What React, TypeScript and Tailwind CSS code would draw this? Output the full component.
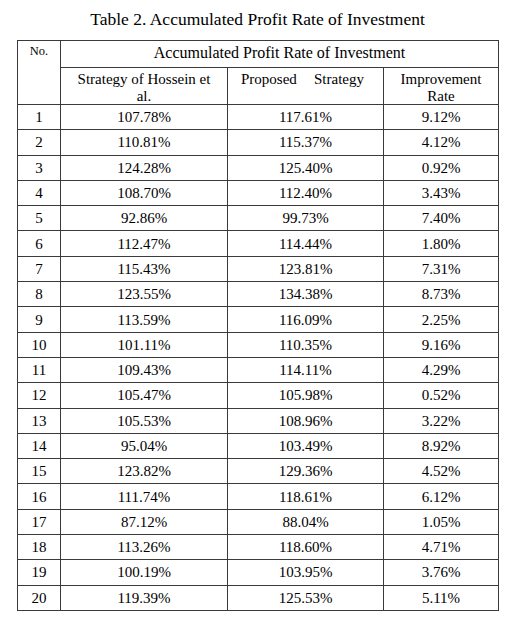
const rows = [
  ["107.78%", "117.61%", "9.12%"],
  ["110.81%", "115.37%", "4.12%"],
  ["124.28%", "125.40%", "0.92%"],
  ["108.70%", "112.40%", "3.43%"],
  ["92.86%", "99.73%", "7.40%"],
  ["112.47%", "114.44%", "1.80%"],
  ["115.43%", "123.81%", "7.31%"],
  ["123.55%", "134.38%", "8.73%"],
  ["113.59%", "116.09%", "2.25%"],
  ["101.11%", "110.35%", "9.16%"],
  ["109.43%", "114.11%", "4.29%"],
  ["105.47%", "105.98%", "0.52%"],
  ["105.53%", "108.96%", "3.22%"],
  ["95.04%", "103.49%", "8.92%"],
  ["123.82%", "129.36%", "4.52%"],
  ["111.74%", "118.61%", "6.12%"],
  ["87.12%", "88.04%", "1.05%"],
  ["113.26%", "118.60%", "4.71%"],
  ["100.19%", "103.95%", "3.76%"],
  ["119.39%", "125.53%", "5.11%"],
]

export default function App() {
  return (
    <div className="w-[525px] h-[629px] bg-white text-black font-['Liberation_Serif']">
      <div className="ml-[17px] w-[481px] pt-[9px]">
        <p className="font-['Liberation_Serif'] text-center text-[17.5px] leading-[20px]">
          Table 2. Accumulated Profit Rate of Investment
        </p>

        <table className="font-['Liberation_Serif'] mt-[11px] w-[481px] table-fixed border-collapse text-[15px]">
          <colgroup>
            <col className="w-[43px]" />
            <col className="w-[167px]" />
            <col className="w-[156px]" />
            <col className="w-[115px]" />
          </colgroup>
          <thead>
            <tr className="h-[27px]">
              <td rowSpan={2} className="font-['Liberation_Serif'] border border-[#3a3a3a] p-0 pt-[3px] text-center align-top text-[12.5px] leading-[14px]">
                No.
              </td>
              <td colSpan={3} className="font-['Liberation_Serif'] border border-[#3a3a3a] p-0 pb-[2px] text-center align-middle text-[16px] leading-[18px]">
                Accumulated Profit Rate of Investment
              </td>
            </tr>
            <tr className="h-[37px]">
              <td className="font-['Liberation_Serif'] border border-[#3a3a3a] p-0 pt-[3px] px-[14px] text-center align-top leading-[16.5px]">
                Strategy of Hossein et al.
              </td>
              <td className="font-['Liberation_Serif'] border border-[#3a3a3a] p-0 pt-[3px] text-center align-top leading-[16.5px]">
                <div className="flex justify-between pl-[13px] pr-[19px]">
                  <span>Proposed</span>
                  <span>Strategy</span>
                </div>
              </td>
              <td className="font-['Liberation_Serif'] border border-[#3a3a3a] p-0 pt-[3px] text-center align-top leading-[16.5px]">
                Improvement
                <br />
                Rate
              </td>
            </tr>
          </thead>
          <tbody>
            {rows.map((r, i) => (
              <tr key={i} className="h-[25.3px]">
                <td className="font-['Liberation_Serif'] border border-[#3a3a3a] p-0 text-center align-middle leading-[18px]">{i + 1}</td>
                <td className="font-['Liberation_Serif'] border border-[#3a3a3a] p-0 text-center align-middle leading-[18px]">{r[0]}</td>
                <td className="font-['Liberation_Serif'] border border-[#3a3a3a] p-0 text-center align-middle leading-[18px]">{r[1]}</td>
                <td className="font-['Liberation_Serif'] border border-[#3a3a3a] p-0 text-center align-middle leading-[18px]">{r[2]}</td>
              </tr>
            ))}
          </tbody>
        </table>
      </div>
    </div>
  )
}
